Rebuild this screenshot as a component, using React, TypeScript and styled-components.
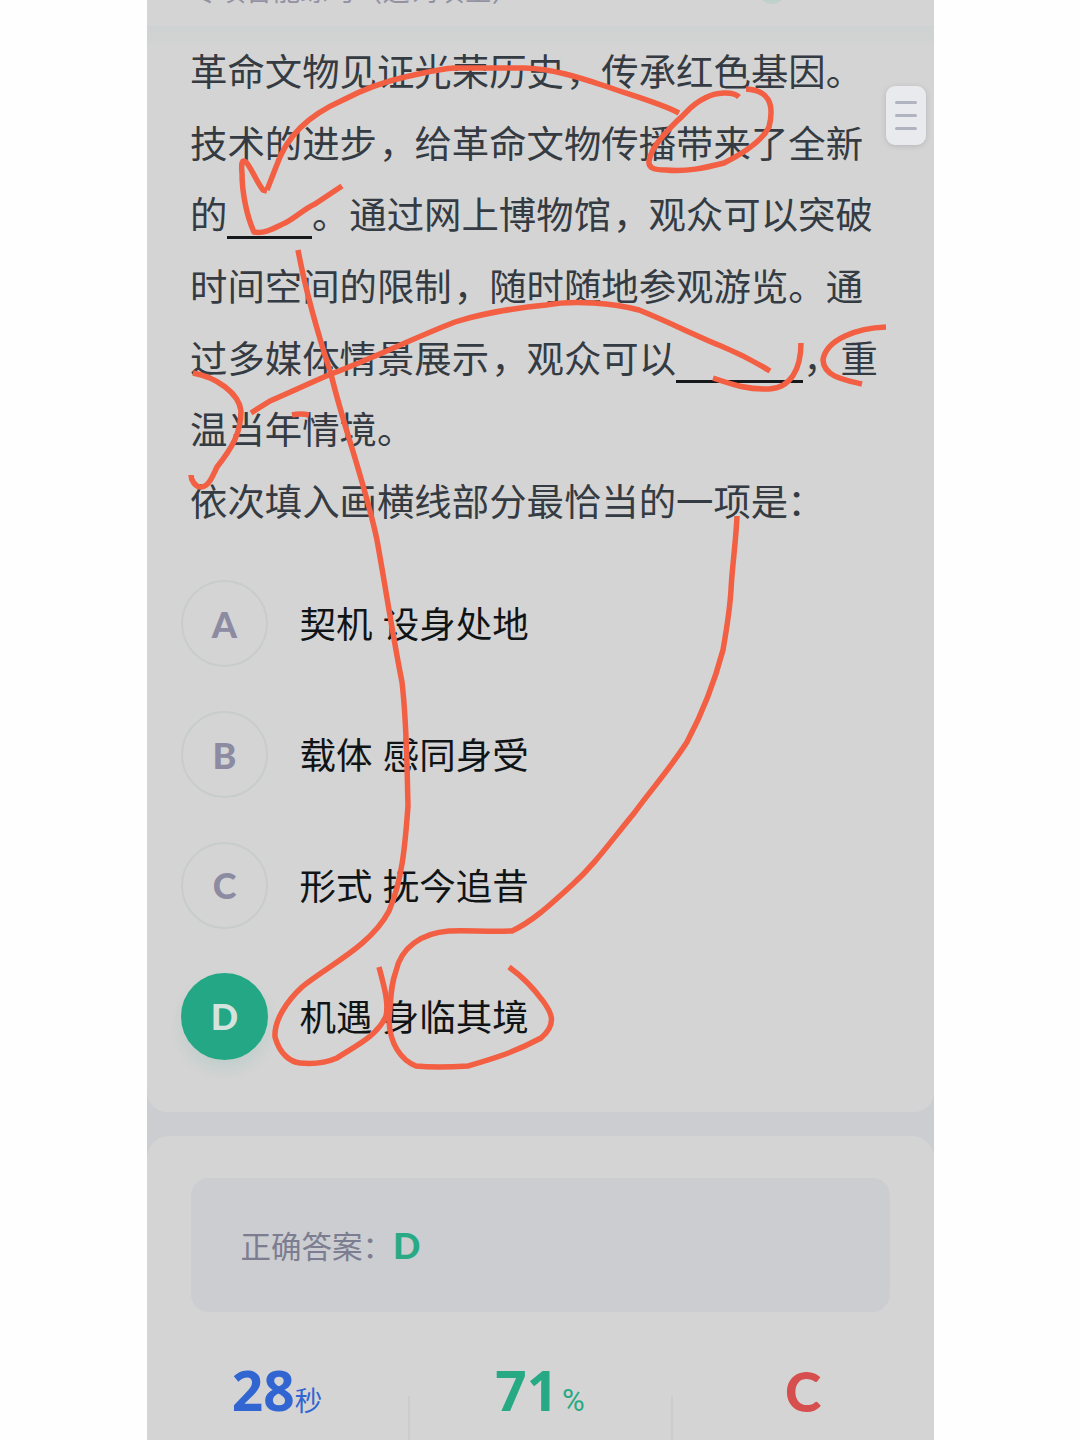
import React from "react";
import styled, { createGlobalStyle } from "styled-components";

const cjk = `"Noto Sans CJK SC", sans-serif`;

const GlobalStyle = createGlobalStyle`
  html, body { margin: 0; padding: 0; background: #fefefe; }
  * { box-sizing: border-box; }
`;

const Page = styled.div`
  position: relative;
  width: 1080px;
  height: 1440px;
  overflow: hidden;
  display: flex;
  justify-content: center;
  background: #fefefe;
`;

const Screen = styled.main`
  width: 787px;
  height: 1440px;
  display: flex;
  flex-direction: column;
  gap: 24px;
  overflow: hidden;
  background: #cbcdd0;
  font-family: ${cjk};
`;

const QuestionCard = styled.section`
  height: 1112px;
  flex: none;
  border-radius: 0 0 20px 20px;
  background: #d4d4d4;
  overflow: hidden;
`;

const Header = styled.header`
  height: 26px;
  padding: 0 148px 0 44px;
  display: flex;
  justify-content: space-between;
`;

const Category = styled.div`
  height: 40px;
  margin-top: -31px;
  font-size: 27.4px;
  line-height: 40px;
  white-space: nowrap;
  color: #9292a3;
`;

const StatusDot = styled.span`
  width: 28px;
  height: 28px;
  margin-top: -24px;
  border-radius: 50%;
  background: #bfd1ca;
`;

const HeaderShade = styled.div`
  height: 18px;
  background: linear-gradient(#cfd2d2, #d2d3d3);
`;

const Question = styled.div`
  padding: 0 0 0 43.5px;
  margin-top: -9px;
  font-size: 37.4px;
  line-height: 71.7px;
  color: #343b42;
  white-space: nowrap;
`;

const Line = styled.div`
  height: 71.7px;
`;

const Mark = styled.span<{ $shift: number }>`
  margin: 0 ${(p) => -p.$shift}px 0 ${(p) => p.$shift}px;
`;

const Blank = styled.span<{ $width: number }>`
  display: inline-block;
  width: ${(p) => p.$width}px;
  height: 3px;
  vertical-align: -10px;
  background: #15191c;
`;

const Options = styled.ul`
  list-style: none;
  margin: 0;
  padding: 43.5px 0 0 34.5px;
`;

const Option = styled.li`
  height: 130.8px;
  display: flex;
  align-items: flex-start;
  gap: 31.5px;
`;

const Badge = styled.span<{ $selected?: boolean }>`
  width: 87px;
  height: 87px;
  flex: none;
  display: flex;
  align-items: center;
  justify-content: center;
  border-radius: 50%;
  border: 2px solid ${(p) => (p.$selected ? "#24a785" : "#c8cccc")};
  background: ${(p) => (p.$selected ? "#24a785" : "transparent")};
  box-shadow: ${(p) => (p.$selected ? "0 10px 14px rgba(36,167,133,.1)" : "none")};
  color: ${(p) => (p.$selected ? "#d5e3df" : "#8c8ba2")};
  font: 900 36px/1 Lato, sans-serif;
`;

const OptionText = styled.span`
  font-size: 36.5px;
  line-height: 86px;
  word-spacing: 2px;
  color: #111416;
`;

const ResultCard = styled.section`
  flex: 1;
  padding: 42px 44px 0;
  border-radius: 22px 22px 0 0;
  background: #d4d4d4;
`;

const Answer = styled.div`
  height: 134px;
  padding: 0 0 0 50px;
  display: flex;
  align-items: center;
  border-radius: 18px;
  background: #cbcdd0;
  font-size: 30.5px;
  color: #7c7d90;
`;

const AnswerLetter = styled.strong`
  font: 900 36px/1 Lato, sans-serif;
  color: #2aaa84;
`;

const Stats = styled.div`
  margin: 42px -44px 0;
  height: 90px;
  display: flex;
`;

const Stat = styled.div<{ $color: string }>`
  flex: 1;
  height: 70px;
  display: flex;
  justify-content: center;
  align-items: baseline;
  color: ${(p) => p.$color};
`;

const Divider = styled.span`
  width: 2px;
  height: 60px;
  margin-top: 42px;
  background: #cacccd;
`;

const Figure = styled.strong`
  font: 700 55px/72px "Noto Sans", sans-serif;
`;

const Grade = styled.strong`
  font: 900 55px/74px Lato, sans-serif;
`;

const Unit = styled.span`
  font-size: 27.5px;
`;

const Percent = styled.span`
  margin-left: 4px;
  font: 400 31px/1 Roboto, sans-serif;
`;

const Drawer = styled.button`
  position: absolute;
  left: 886px;
  top: 86px;
  width: 40px;
  height: 59px;
  padding: 0;
  display: flex;
  flex-direction: column;
  align-items: center;
  justify-content: center;
  gap: 10px;
  border: 0;
  border-radius: 9px;
  background: #e9eaed;
  box-shadow: 0 1px 5px rgba(90, 95, 105, 0.25);
`;

const Bar = styled.span`
  width: 22px;
  height: 3px;
  border-radius: 2px;
  background: #b0b4c0;
`;

const Ink = styled.svg`
  position: absolute;
  inset: 0;
  pointer-events: none;
`;

const Comma = () => <Mark $shift={2}>，</Mark>;

const options = [
  { key: "A", text: "契机 设身处地" },
  { key: "B", text: "载体 感同身受" },
  { key: "C", text: "形式 抚今追昔" },
  { key: "D", text: "机遇 身临其境", selected: true },
];

const strokes = [
  // arrow from the circled word to the first blank
  "M679 113C660 103 630 95 605 86C578 77 553 69 525 68L455 68C437 69 425 73 405 77C383 82 362 90 343 100C325 108 311 117 300 128C288 140 280 155 276 167L267 190",
  "M267 191L263 190C256 181 252 169 246 162C242 159 241 163 242 173C242 193 247 217 254 232C265 234 274 228 285 223C295 218 304 209 315 204L342 186",
  // circled word
  "M739 97C733 91 716 92 705 98C690 105 687 113 677 121C664 134 651 148 649 161C648 168 654 170 666 170C687 172 704 168 724 163C744 153 762 141 769 127C775 103 768 90 746 89",
  // link from the second blank
  "M770 371C757 363 743 355 721 346C692 334 669 322 639 310C613 303 574 300 546 305C513 308 477 315 455 322C416 337 371 359 331 374C312 382 291 392 270 401L251 413",
  "M713 378C731 384 747 390 769 389C790 388 801 370 801 343",
  "M886 327C858 328 826 339 823 360C824 377 845 380 862 384",
  "M193 373C216 377 239 393 241 411C241 433 232 448 217 467C212 478 208 487 201 487C195 487 191 480 191 475",
  "M292 415Q301 413 309 415",
  // link from the first blank to the chosen option
  "M298 250C304 282 316 328 331 374C343 425 365 483 377 540C386 590 393 637 402 682C407 725 407 770 408 806C405 847 402 881 389 911C370 947 327 966 302 987C287 1001 274 1020 275 1037C280 1055 291 1062 300 1063Q321 1065 337 1058C353 1047 377 1037 386 1016C389 1003 384 986 379 967",
  // link from the prompt to the chosen option
  "M737 516C736 541 732 568 731 590C730 607 727 627 723 650C714 684 704 710 687 742C669 770 651 790 635 812C608 845 594 865 573 884C550 905 533 921 512 931C485 932 468 930 449 931C421 933 401 948 396 971C390 987 391 1001 389 1021C390 1044 401 1060 416 1066C435 1068 453 1067 468 1066C492 1059 513 1053 541 1038C558 1023 551 1012 543 1001C532 986 523 977 509 967",
];

export default function App() {
  return (
    <Page>
      <GlobalStyle />
      <Screen>
        <QuestionCard>
          <Header>
            <Category>专项智能练习（选词填空）</Category>
            <StatusDot />
          </Header>
          <HeaderShade />
          <Question>
            <Line>革命文物见证光荣历史<Comma />传承红色基因。</Line>
            <Line>技术的进步<Comma />给革命文物传播带来了全新</Line>
            <Line>的<Blank $width={84.5} />。通过网上博物馆<Comma />观众可以突破</Line>
            <Line>时间空间的限制<Comma />随时随地参观游览。通</Line>
            <Line>过多媒体情景展示<Comma />观众可以<Blank $width={127} />，重</Line>
            <Line>温当年情境。</Line>
            <Line>依次填入画横线部分最恰当的一项是<Mark $shift={-1}>：</Mark></Line>
          </Question>
          <Options>
            {options.map((o) => (
              <Option key={o.key}>
                <Badge $selected={o.selected}>{o.key}</Badge>
                <OptionText>{o.text}</OptionText>
              </Option>
            ))}
          </Options>
        </QuestionCard>
        <ResultCard>
          <Answer>
            正确答案：<AnswerLetter>D</AnswerLetter>
          </Answer>
          <Stats>
            <Stat $color="#3166d2">
              <Figure>28</Figure>
              <Unit>秒</Unit>
            </Stat>
            <Divider />
            <Stat $color="#27a983">
              <Figure>71</Figure>
              <Percent>%</Percent>
            </Stat>
            <Divider />
            <Stat $color="#d64e4e">
              <Grade>C</Grade>
            </Stat>
          </Stats>
        </ResultCard>
      </Screen>
      <Drawer aria-label="menu">
        <Bar />
        <Bar />
        <Bar />
      </Drawer>
      <Ink width="1080" height="1440" viewBox="0 0 1080 1440" fill="none" stroke="#f25f43" strokeWidth="5.5" strokeLinejoin="round">
        {strokes.map((d) => (
          <path key={d} d={d} />
        ))}
      </Ink>
    </Page>
  );
}
